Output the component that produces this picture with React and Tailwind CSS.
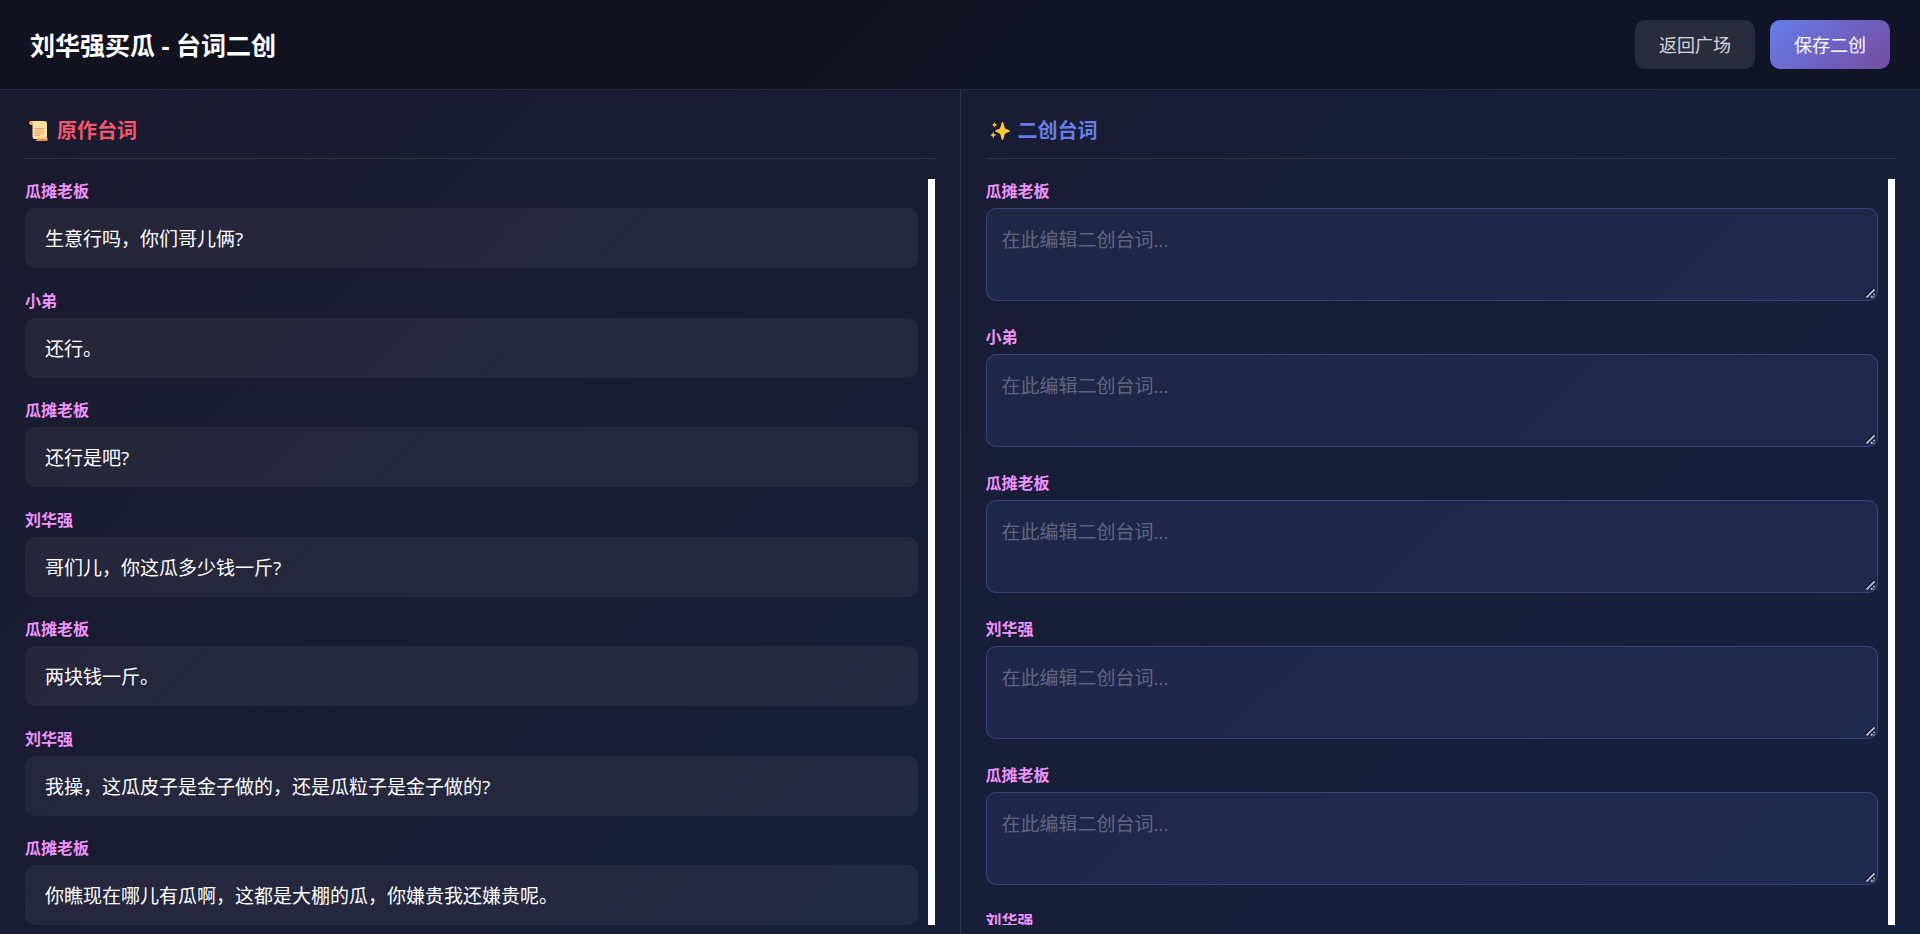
const originalLines = [
  { role: '瓜摊老板', text: '生意行吗，你们哥儿俩?' },
  { role: '小弟', text: '还行。' },
  { role: '瓜摊老板', text: '还行是吧?' },
  { role: '刘华强', text: '哥们儿，你这瓜多少钱一斤?' },
  { role: '瓜摊老板', text: '两块钱一斤。' },
  { role: '刘华强', text: '我操，这瓜皮子是金子做的，还是瓜粒子是金子做的?' },
  { role: '瓜摊老板', text: '你瞧现在哪儿有瓜啊，这都是大棚的瓜，你嫌贵我还嫌贵呢。' },
];

const remixRoles = originalLines.slice(0, 6).map((line) => line.role);

const scrollArea =
  'flex-1 min-h-0 overflow-y-auto pr-[10px] border-r-[7px] border-white flex flex-col [scrollbar-width:none]';

function ScrollIcon() {
  return (
    <svg className="w-5 h-5 ml-1" viewBox="0 0 20 20" aria-hidden="true">
      <path d="M2 0H15.5Q18 0 18 2.5V18H5.5Q3.5 18 3.5 16V4H2Q0.3 3.6 0.3 1.8Q0.4 0.3 2 0Z" fill="#ffdca3" />
      <path d="M0.3 1.6Q0.6 0 2.2 0Q3.5 0.5 3.5 2V4H2Q0.5 3.6 0.3 1.6Z" fill="#e8a457" />
      <path d="M8 17.6H19.2Q19.2 20 17 20H6Q8 19.6 8 17.6Z" fill="#e8964a" />
      <path d="M5.5 7.5H15M5.5 9.8H15M5.5 12H15M5.5 14.2H11.5" stroke="#e3a15c" strokeWidth="1" />
    </svg>
  );
}

function SparklesIcon() {
  return (
    <svg className="w-5 h-5 ml-1" viewBox="0 0 20 20" fill="#ffc83d" aria-hidden="true">
      <path d="M12.5 1Q13.1 1 13.4 2L14.7 6.4Q15 7.6 16.2 8L19.3 9.2Q20.4 10 19.3 10.8L16.2 12Q15 12.4 14.7 13.6L13.4 18Q13.1 19 12.5 19T11.6 18L10.3 13.6Q10 12.4 8.8 12L5.7 10.8Q4.6 10 5.7 9.2L8.8 8Q10 7.6 10.3 6.4L11.6 2Q11.9 1 12.5 1Z" />
      <path d="M4.5 1L5.3 3.1L7.4 3.9L5.3 4.7L4.5 6.8L3.7 4.7L1.6 3.9L3.7 3.1Z" />
      <path d="M3.2 10.4L4.1 13L6.6 14L4.1 15L3.2 17.6L2.3 15L0 14L2.3 13Z" />
    </svg>
  );
}

// Drag handle in the textarea's corner
function ResizeGrip() {
  return (
    <svg className="absolute right-[3px] bottom-[3px] w-[10px] h-[10px] pointer-events-none" viewBox="0 0 10 10" aria-hidden="true">
      <path d="M0.5 8.5L8.5 0.5M4.5 8.5L8.5 4.5" stroke="#0b0d18" strokeWidth="1.5" />
      <path d="M1.5 9.5L9.5 1.5M6 9.5L7.5 8M8.5 7L9.5 6M8.5 9.5H9.5" stroke="#b9bcc8" strokeWidth="1.8" />
    </svg>
  );
}

function PanelTitle({ icon, color, children }) {
  return (
    <h2 className={`flex items-center gap-2 h-11 pb-3 mb-5 border-b border-white/10 text-xl font-bold ${color}`}>
      {icon}
      {children}
    </h2>
  );
}

export default function App() {
  return (
    <div className="h-screen flex flex-col bg-[linear-gradient(135deg,#1a1a2e_0%,#16213e_100%)] text-white font-['Open_Sans','Noto_Sans_CJK_SC',sans-serif]">
      <header className="flex items-center justify-between px-[30px] py-5 bg-black/30 border-b border-white/10">
        <h1 className="text-[25px] leading-8 font-bold">刘华强买瓜 - 台词二创</h1>
        <div className="flex gap-[15px]">
          <button type="button" className="h-[49px] px-6 rounded-[10px] bg-white/10 text-white/80 text-lg">
            返回广场
          </button>
          <button type="button" className="h-[49px] px-6 rounded-[10px] bg-[linear-gradient(135deg,#667eea_0%,#764ba2_100%)] text-lg">
            保存二创
          </button>
        </div>
      </header>

      <main className="flex-1 min-h-0 grid grid-cols-[1fr_1px_1fr] grid-rows-[minmax(0,1fr)]">
        {/* Original script */}
        <section className="flex flex-col min-h-0 min-w-0 px-[25px] pt-[25px] pb-[9px]">
          <PanelTitle icon={<ScrollIcon />} color="text-[#f5576c]">原作台词</PanelTitle>
          <div className={`${scrollArea} justify-between gap-5`}>
            {originalLines.map((line, i) => (
              <div key={i} className="shrink-0">
                <div className="mb-[5px] text-base leading-6 font-bold text-[#f093fb]">{line.role}</div>
                <p className="px-5 pt-4 pb-[14px] rounded-[10px] bg-white/5 text-[19px] leading-[30px]">{line.text}</p>
              </div>
            ))}
          </div>
        </section>

        <div className="bg-white/10" />

        {/* Remix editor */}
        <section className="flex flex-col min-h-0 min-w-0 px-[25px] pt-[25px] pb-[9px]">
          <PanelTitle icon={<SparklesIcon />} color="text-[#667eea]">二创台词</PanelTitle>
          <div className={`${scrollArea} gap-6`}>
            {remixRoles.map((role, i) => (
              <div key={i} className="shrink-0">
                <label htmlFor={`remix-${i}`} className="block mb-[5px] text-base leading-6 font-bold text-[#f093fb]">
                  {role}
                </label>
                <div className="relative">
                  <textarea
                    id={`remix-${i}`}
                    placeholder="在此编辑二创台词..."
                    className="block w-full h-[93px] px-[15px] pt-4 pb-[14px] resize-y rounded-[10px] border border-[#667eea]/30 bg-[#667eea]/10 text-[19px] leading-[30px] placeholder:text-white/30 [&::-webkit-resizer]:hidden"
                  />
                  <ResizeGrip />
                </div>
              </div>
            ))}
          </div>
        </section>
      </main>
    </div>
  );
}
